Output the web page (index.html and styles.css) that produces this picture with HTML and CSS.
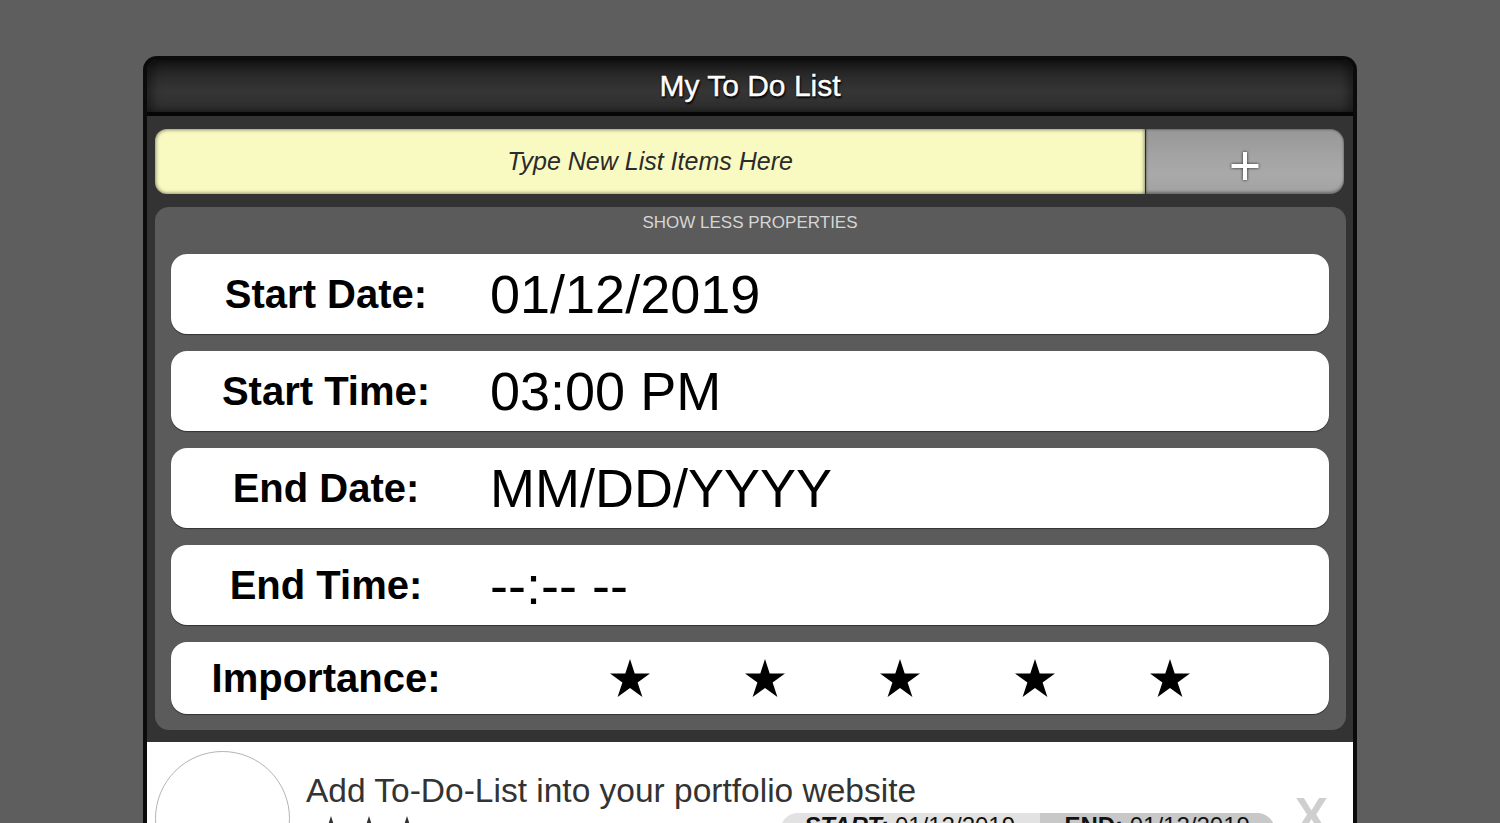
FILE: index.html
```html
<!DOCTYPE html>
<html lang="en">
<head>
<meta charset="utf-8">
<title>My To Do List</title>
<link rel="stylesheet" href="styles.css">
</head>
<body>
<div class="app">
  <header class="app-header">
    <h1 class="app-title">My To Do List</h1>
  </header>
  <main class="app-body">
    <div class="add-row">
      <input class="new-item" type="text" placeholder="Type New List Items Here">
      <button class="add-btn" type="button" aria-label="Add">
        <svg class="plus-icon" width="30" height="30" viewBox="0 0 30 30">
          <rect x="13" y="1" width="4" height="28" fill="#fff"/>
          <rect x="1.5" y="13" width="27" height="4" fill="#fff"/>
        </svg>
      </button>
    </div>
    <section class="props">
      <div class="props-toggle">SHOW LESS PROPERTIES</div>
      <div class="prop-row">
        <span class="prop-label">Start Date:</span>
        <span class="prop-value">01/12/2019</span>
      </div>
      <div class="prop-row">
        <span class="prop-label">Start Time:</span>
        <span class="prop-value">03:00 PM</span>
      </div>
      <div class="prop-row">
        <span class="prop-label">End Date:</span>
        <span class="prop-value">MM/DD/YYYY</span>
      </div>
      <div class="prop-row">
        <span class="prop-label">End Time:</span>
        <span class="prop-value">--:-- --</span>
      </div>
      <div class="prop-row prop-row-short">
        <span class="prop-label">Importance:</span>
        <span class="stars">
          <svg class="star" viewBox="0 0 40 38"><polygon points="20,0 24.7,14.5 40,14.5 27.6,23.5 32.4,38 20,29 7.6,38 12.4,23.5 0,14.5 15.3,14.5"/></svg>
          <svg class="star" viewBox="0 0 40 38"><polygon points="20,0 24.7,14.5 40,14.5 27.6,23.5 32.4,38 20,29 7.6,38 12.4,23.5 0,14.5 15.3,14.5"/></svg>
          <svg class="star" viewBox="0 0 40 38"><polygon points="20,0 24.7,14.5 40,14.5 27.6,23.5 32.4,38 20,29 7.6,38 12.4,23.5 0,14.5 15.3,14.5"/></svg>
          <svg class="star" viewBox="0 0 40 38"><polygon points="20,0 24.7,14.5 40,14.5 27.6,23.5 32.4,38 20,29 7.6,38 12.4,23.5 0,14.5 15.3,14.5"/></svg>
          <svg class="star" viewBox="0 0 40 38"><polygon points="20,0 24.7,14.5 40,14.5 27.6,23.5 32.4,38 20,29 7.6,38 12.4,23.5 0,14.5 15.3,14.5"/></svg>
        </span>
      </div>
    </section>
  </main>
  <ul class="items">
    <li class="item">
      <div class="item-check"></div>
      <div class="item-main">
        <div class="item-title">Add To-Do-List into your portfolio website</div>
        <div class="item-meta">
          <span class="mini-stars">
            <svg class="mini-star" viewBox="0 0 40 38"><polygon points="20,0 24.7,14.5 40,14.5 27.6,23.5 32.4,38 20,29 7.6,38 12.4,23.5 0,14.5 15.3,14.5"/></svg>
            <svg class="mini-star" viewBox="0 0 40 38"><polygon points="20,0 24.7,14.5 40,14.5 27.6,23.5 32.4,38 20,29 7.6,38 12.4,23.5 0,14.5 15.3,14.5"/></svg>
            <svg class="mini-star" viewBox="0 0 40 38"><polygon points="20,0 24.7,14.5 40,14.5 27.6,23.5 32.4,38 20,29 7.6,38 12.4,23.5 0,14.5 15.3,14.5"/></svg>
          </span>
          <span class="dates">
            <span class="date-seg date-start"><b><i>START:</i></b> 01/12/2019</span>
            <span class="date-seg date-end"><b>END:</b> 01/12/2019</span>
          </span>
        </div>
      </div>
      <div class="item-close">X</div>
    </li>
  </ul>
</div>
</body>
</html>
```

FILE: styles.css
```css
html, body {
  margin: 0;
  padding: 0;
  height: 100%;
  overflow: hidden;
}

body {
  background: #5e5e5e;
  font-family: "Liberation Sans", Arial, Helvetica, sans-serif;
}

.app {
  width: 1214px;
  box-sizing: border-box;
  margin: 56px auto 0;
  border: 4px solid #0b0b0b;
  border-bottom: none;
  border-radius: 14px 14px 0 0;
  background: #333333;
}

.app-header {
  height: 52px;
  border-bottom: 4px solid #050505;
  border-radius: 10px 10px 0 0;
  background: linear-gradient(#181818 0%, #2c2c2c 35%, #353535 60%, #2e2e2e 100%);
  box-shadow: inset 6px 0 8px rgba(0, 0, 0, 0.35), inset -6px 0 8px rgba(0, 0, 0, 0.35);
  display: flex;
  align-items: center;
  justify-content: center;
}

.app-title {
  margin: -1px 0 0;
  font-size: 30px;
  font-weight: normal;
  color: #ffffff;
  text-shadow: 1px 2px 2px #000, 0 0 2px #000;
  line-height: 1;
  -webkit-text-stroke: 0.4px #fff;
}

.app-body {
  padding: 13px 7px 12px 8px;
  background: #333333;
}

.add-row {
  display: flex;
  height: 65px;
  margin-right: 2px;
}

.new-item {
  flex: 1;
  min-width: 0;
  height: 65px;
  box-sizing: border-box;
  border: none;
  outline: none;
  margin: 0;
  padding: 0 10px;
  border-radius: 12px 0 0 12px;
  background: #f9fac2;
  box-shadow: inset 0 0 4px rgba(0, 0, 0, 0.65);
  font-family: "Liberation Sans", Arial, sans-serif;
  font-style: italic;
  font-size: 25px;
  text-align: center;
  color: #222;
}

.new-item::placeholder {
  color: #2b2b2b;
  opacity: 1;
}

.add-btn {
  width: 199px;
  height: 65px;
  margin: 0;
  padding: 8px 0 0;
  border: none;
  border-left: 1px solid #2a2a2a;
  border-radius: 0 14px 14px 0;
  background: linear-gradient(#979797 0%, #a4a4a4 45%, #a9a9a9 70%, #a2a2a2 100%);
  box-shadow: inset 0 -2px 3px rgba(0, 0, 0, 0.35), inset 0 1px 2px rgba(0, 0, 0, 0.3);
  display: flex;
  align-items: center;
  justify-content: center;
  box-sizing: border-box;
}

.plus-icon {
  filter: drop-shadow(0 0 1.5px rgba(0, 0, 0, 0.8));
}

.props {
  margin-top: 13px;
  background: #5b5b5b;
  border-radius: 14px;
  padding: 5px 17px 16px 16px;
}

.props-toggle {
  text-align: center;
  font-size: 17px;
  line-height: 22px;
  color: #d6d6d6;
  margin-bottom: 20px;
}

.prop-row {
  height: 80px;
  background: #ffffff;
  border-radius: 16px;
  box-shadow: 0 1px 1px rgba(0, 0, 0, 0.45);
  display: flex;
  align-items: center;
  margin-bottom: 17px;
}

.prop-row-short {
  height: 72px;
  margin-bottom: 0;
}

.prop-label {
  width: 310px;
  flex: none;
  text-align: center;
  font-size: 40px;
  font-weight: bold;
  color: #000;
}

.prop-value {
  padding-left: 9px;
  font-size: 54px;
  color: #000;
}

.stars {
  display: flex;
  gap: 95px;
  padding-left: 129px;
  margin-top: -1px;
}

.star {
  width: 40px;
  height: 38px;
  fill: #000;
}

.items {
  list-style: none;
  margin: 0;
  padding: 0;
  background: #ffffff;
  height: 200px;
}

.item {
  display: flex;
  align-items: flex-start;
  padding: 9px 25px 0 8px;
}

.item-check {
  width: 135px;
  height: 135px;
  box-sizing: border-box;
  border: 1px solid #b4b4b4;
  border-radius: 50%;
  flex: none;
}

.item-main {
  flex: 1;
  margin-left: 16px;
  padding-top: 21px;
}

.item-title {
  font-size: 33.5px;
  color: #333;
}

.item-meta {
  display: flex;
  align-items: flex-start;
  margin-top: 3px;
}

.mini-stars {
  display: flex;
  gap: 16px;
  padding-left: 14px;
  padding-top: 3px;
}

.mini-star {
  width: 22px;
  height: 21px;
  fill: #333;
}

.dates {
  margin-left: auto;
  display: flex;
  border-radius: 18px;
  overflow: hidden;
}

.date-seg {
  font-size: 24px;
  line-height: 26px;
  padding-bottom: 10px;
  text-align: center;
  color: #111;
}

.date-start {
  width: 260px;
  background: #e2e2e2;
}

.date-end {
  width: 235px;
  background: #c8c8c8;
}

.item-close {
  margin-left: 20px;
  margin-top: 40px;
  font-size: 50px;
  line-height: 1;
  font-weight: bold;
  color: #cfcfcf;
}
```
